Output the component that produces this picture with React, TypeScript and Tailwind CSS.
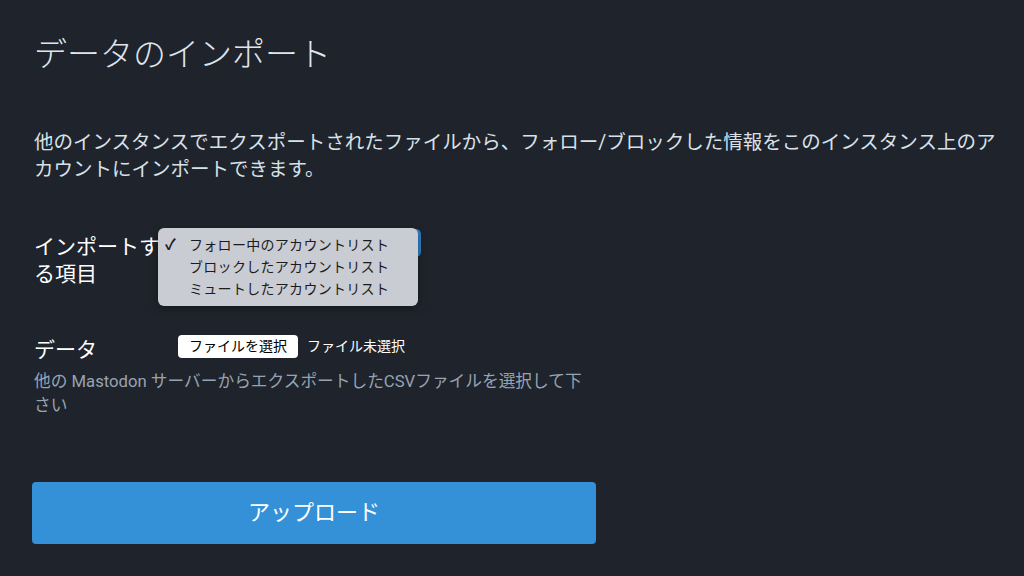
import React from "react";

const options = [
  "フォロー中のアカウントリスト",
  "ブロックしたアカウントリスト",
  "ミュートしたアカウントリスト",
];

function SelectOpen() {
  return (
    <div className="relative mt-[-4.5px] h-[28px] w-[243px] rounded-[5px] bg-[#2f7fc4]">
      {/* native popup list, shown open */}
      <div className="absolute left-[-20px] top-[-1px] z-10 w-[260px] rounded-[6px] bg-[#c9ccd3] py-[6px] shadow-[0_2px_8px_rgba(0,0,0,0.35)]">
        {options.map((label, i) => (
          <div key={label} className="flex h-[22px] items-center pl-[7px] text-[14px] text-[#1c1c1e]">
            <span className="w-[24px] text-[15px] font-bold leading-none">{i === 0 ? "✓" : ""}</span>
            <span className="tracking-[0.3px]">{label}</span>
          </div>
        ))}
      </div>
    </div>
  );
}

export default function App() {
  return (
    <div
      className="min-h-screen bg-[#1f232b] pl-[34px] pr-[14px] pt-[35px] text-[#d9e1e8]"
      style={{ fontFamily: "Roboto, 'Noto Sans CJK JP', sans-serif" }}
    >
      <h1 className="text-[33px] font-light leading-[40px] text-[#dfe5ea]">データのインポート</h1>

      <p className="mt-[54px] text-[19.5px] leading-[27px]">
        他のインスタンスでエクスポートされたファイルから、フォロー/ブロックした情報をこのインスタンス上のアカウントにインポートできます。
      </p>

      <div className="mt-[50.5px] w-[563px]">
        <div className="flex items-start gap-[8px]">
          <label className="w-[136px] text-[21px] leading-[27px] text-white">インポートする項目</label>
          <div>
            <SelectOpen />
          </div>
        </div>

        <div className="mt-[49px] flex items-start gap-[8px]">
          <label className="w-[136px] text-[21px] leading-[27px] text-white">データ</label>
          <div className="mt-[-1.5px] flex items-center gap-[9px]">
            <span className="flex h-[23px] items-center rounded-[4px] bg-white px-[11px] text-[14px] text-black">
              ファイルを選択
            </span>
            <span className="text-[14px] text-white">ファイル未選択</span>
          </div>
        </div>

        <p className="mt-[6px] max-w-[555px] text-[16.7px] leading-[24px] text-[#97a3b3]">
          他の Mastodon サーバーからエクスポートしたCSVファイルを選択して下さい
        </p>

        <button
          type="button"
          className="-ml-[2px] mt-[64px] flex h-[62px] w-[564px] items-center justify-center rounded-[4px] bg-[#3491d8] text-[22px] text-white"
        >
          アップロード
        </button>
      </div>
    </div>
  );
}
